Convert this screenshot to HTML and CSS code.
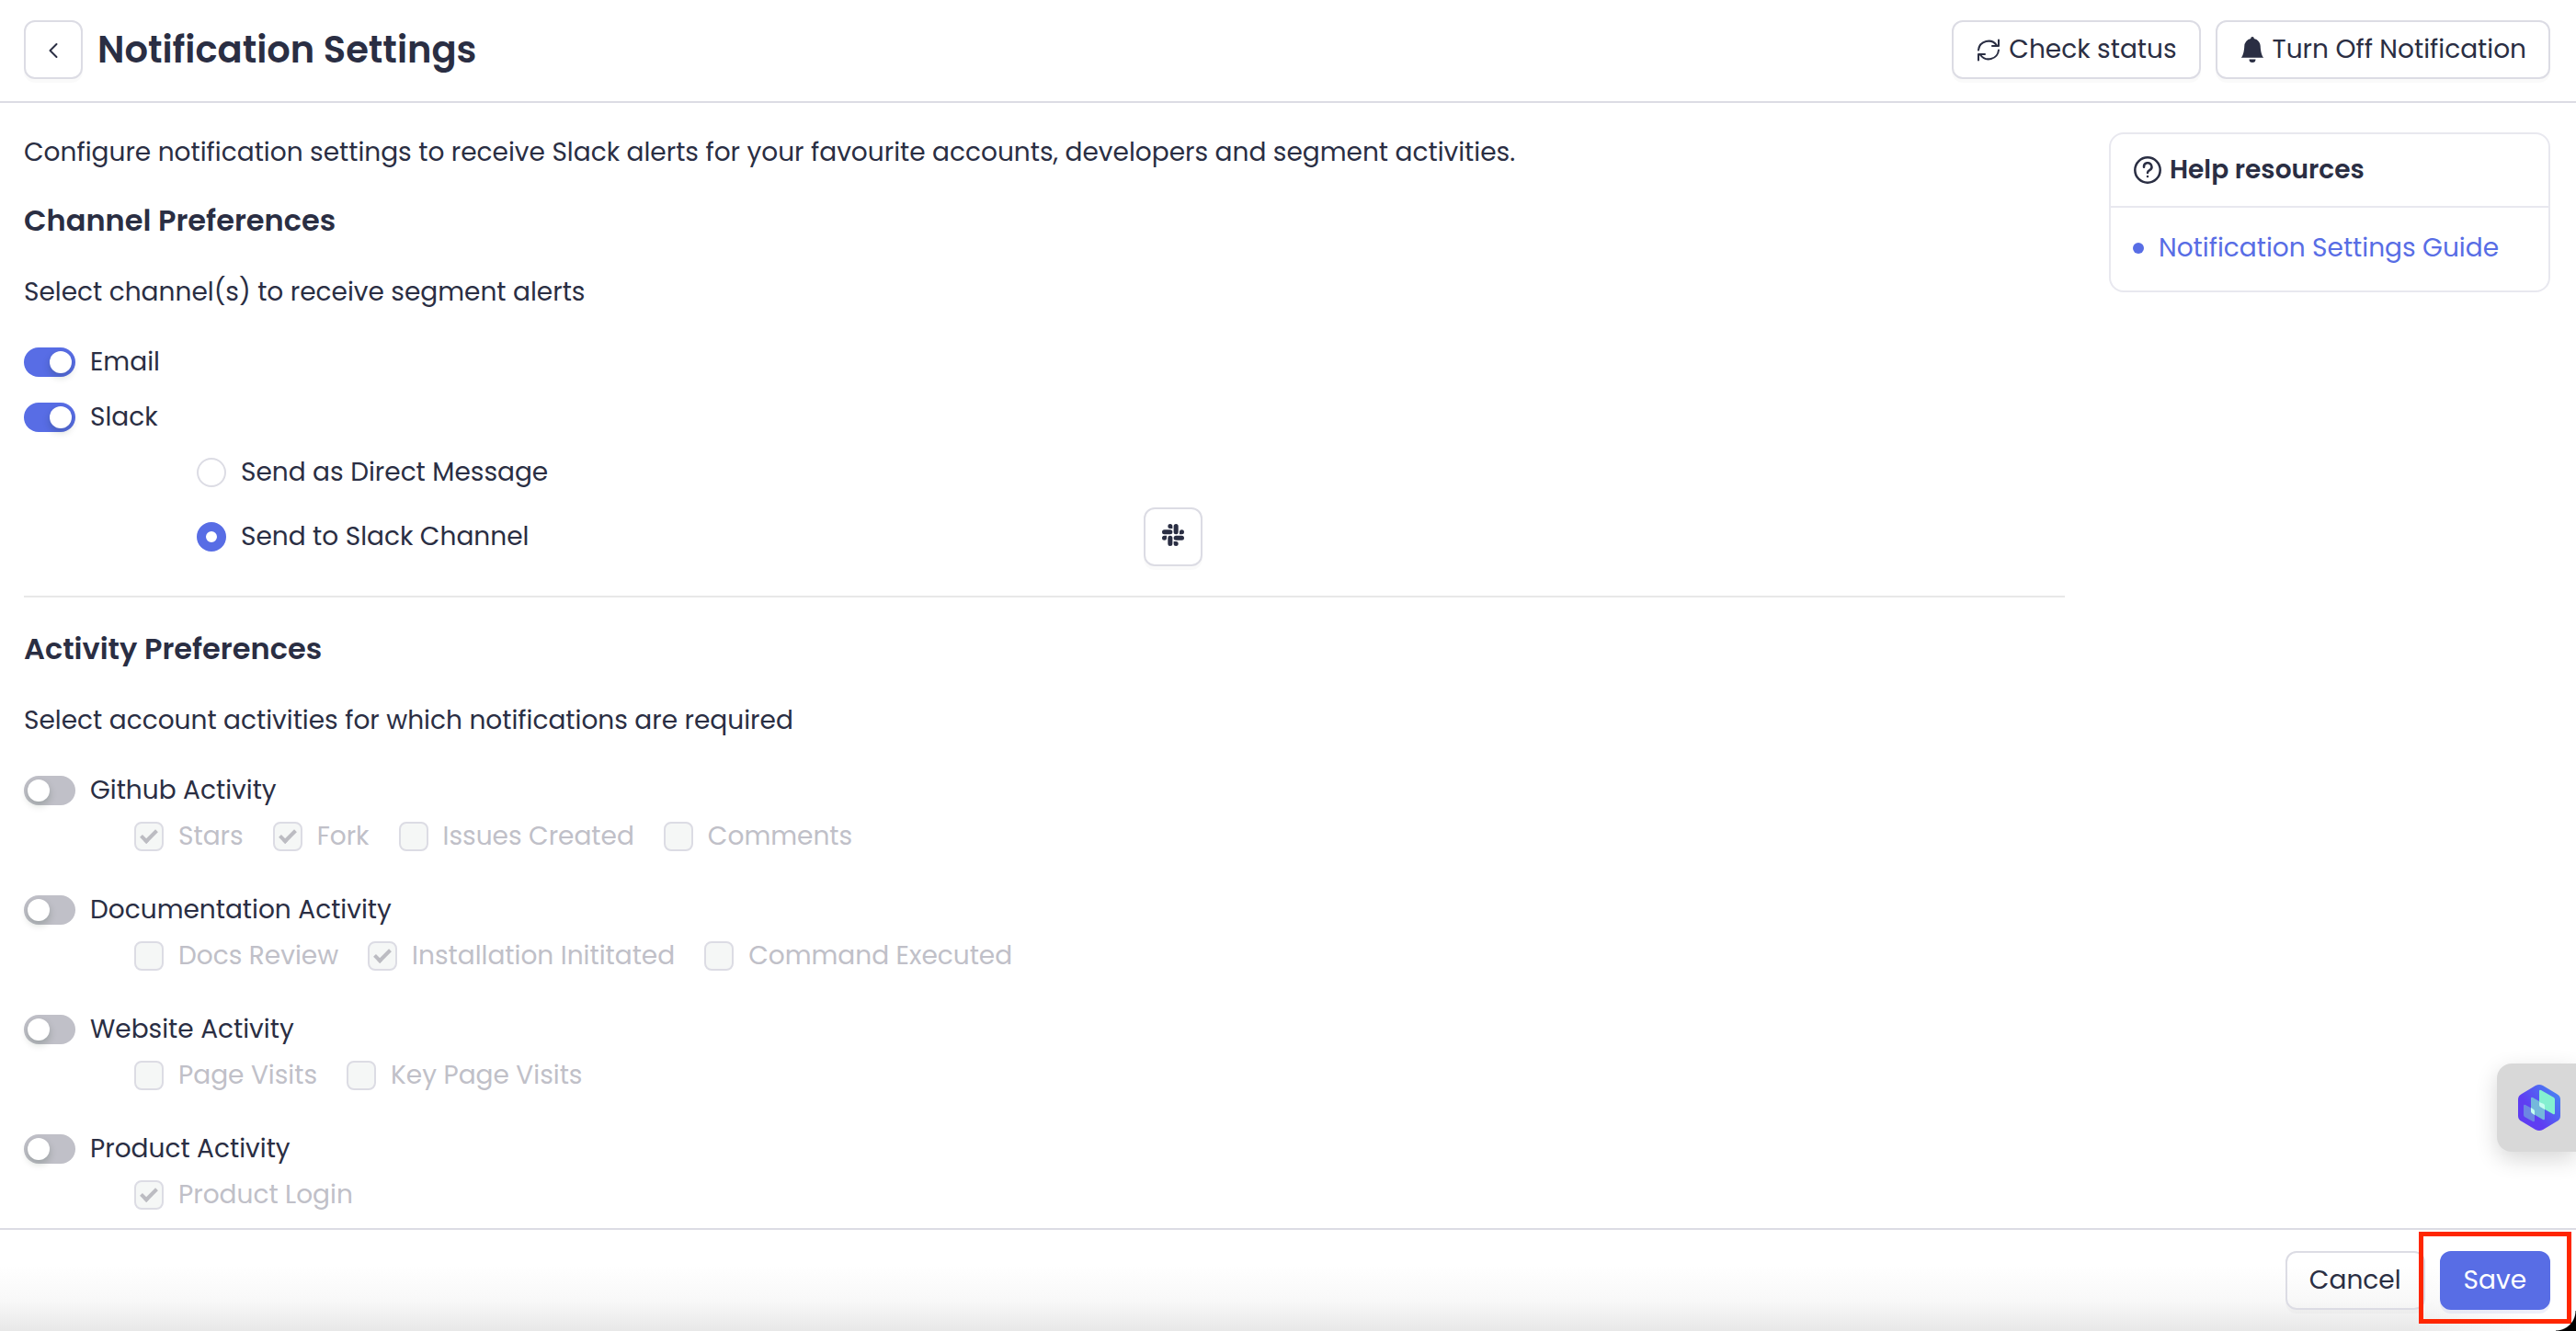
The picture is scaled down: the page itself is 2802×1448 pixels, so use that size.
FILE: index.html
```html
<!DOCTYPE html>
<html lang="en">
<head>
    <meta charset="UTF-8">
    <meta name="viewport" content="width=device-width, initial-scale=1.0">
    <title>Notification Settings</title>
    <link rel="stylesheet" href="styles.css">
</head>
<body>
    <header class="page-header">
        <button class="btn btn-icon" aria-label="Back">
            <svg width="24" height="24" viewBox="0 0 24 24" fill="none" stroke="currentColor" stroke-width="2" stroke-linecap="round" stroke-linejoin="round"><path d="M15.500 6l-7 7 7 7"/></svg>
        </button>
        <h1>Notification Settings</h1>
        <div class="header-actions">
            <button class="btn">
                <svg width="28" height="28" viewBox="0 0 28 28" fill="none" stroke="currentColor" stroke-width="2" stroke-linecap="round" stroke-linejoin="round"><path d="M3 14.500A11 11 0 0 1 23 9.500l1.500.500M25 3.500v6.500h-7M25 14.500A11 11 0 0 1 5 19.500l-1.500-.500M3 25.500v-6.500h7"/></svg>
                Check status
            </button>
            <button class="btn">
                <svg width="28" height="28" viewBox="0 0 16 16" fill="currentColor"><path d="M8 16a2 2 0 0 0 2-2H6a2 2 0 0 0 2 2m.995-14.901a1 1 0 1 0-1.990 0A5 5 0 0 0 3 6c0 1.098-.5 6-2 7h14c-1.500-1-2-5.902-2-7 0-2.420-1.720-4.440-4.005-4.901"/></svg>
                Turn Off Notification
            </button>
        </div>
    </header>

    <main class="page-body">
        <form class="settings" id="settings-form">
            <p class="intro">Configure notification settings to receive Slack alerts for your favourite accounts, developers and segment activities.</p>

            <!-- Channels -->
            <section class="section">
                <h2>Channel Preferences</h2>
                <p class="hint">Select channel(s) to receive segment alerts</p>
                <label class="row"><input type="checkbox" class="switch" checked>Email</label>
                <label class="row"><input type="checkbox" class="switch" checked>Slack</label>
                <div class="slack-options">
                    <label class="row"><input type="radio" class="radio" name="slack-target">Send as Direct Message</label>
                    <div class="slack-channel">
                        <label class="row"><input type="radio" class="radio" name="slack-target" checked>Send to Slack Channel</label>
                        <button type="button" class="btn btn-icon" aria-label="Connect Slack">
                            <svg width="24" height="28" viewBox="0 0 24 28" fill="currentColor"><path d="M5.042 15.165a2.528 2.528 0 0 1-2.520 2.523A2.528 2.528 0 0 1 0 15.165a2.527 2.527 0 0 1 2.522-2.520h2.520v2.520zM6.313 15.165a2.527 2.527 0 0 1 2.521-2.520 2.527 2.527 0 0 1 2.521 2.520v6.313A2.528 2.528 0 0 1 8.834 24a2.528 2.528 0 0 1-2.521-2.522v-6.313zM8.834 5.042a2.528 2.528 0 0 1-2.521-2.520A2.528 2.528 0 0 1 8.834 0a2.528 2.528 0 0 1 2.521 2.522v2.520H8.834zM8.834 6.313a2.528 2.528 0 0 1 2.521 2.521 2.528 2.528 0 0 1-2.521 2.521H2.522A2.528 2.528 0 0 1 0 8.834a2.528 2.528 0 0 1 2.522-2.521h6.312zM18.956 8.834a2.528 2.528 0 0 1 2.522-2.521A2.528 2.528 0 0 1 24 8.834a2.528 2.528 0 0 1-2.522 2.521h-2.522V8.834zM17.688 8.834a2.528 2.528 0 0 1-2.523 2.521 2.527 2.527 0 0 1-2.520-2.521V2.522A2.527 2.527 0 0 1 15.165 0a2.528 2.528 0 0 1 2.523 2.522v6.312zM15.165 18.956a2.528 2.528 0 0 1 2.523 2.522A2.528 2.528 0 0 1 15.165 24a2.527 2.527 0 0 1-2.520-2.522v-2.522h2.520zM15.165 17.688a2.527 2.527 0 0 1-2.520-2.523 2.526 2.526 0 0 1 2.520-2.520h6.313A2.527 2.527 0 0 1 24 15.165a2.528 2.528 0 0 1-2.522 2.523h-6.313z"/></svg>
                        </button>
                    </div>
                </div>
            </section>

            <hr>

            <!-- Activities -->
            <section class="section">
                <h2>Activity Preferences</h2>
                <p class="hint">Select account activities for which notifications are required</p>

                <div class="activity">
                    <label class="row"><input type="checkbox" class="switch">Github Activity</label>
                    <div class="options">
                        <label class="row"><input type="checkbox" class="check" checked disabled>Stars</label>
                        <label class="row"><input type="checkbox" class="check" checked disabled>Fork</label>
                        <label class="row"><input type="checkbox" class="check" disabled>Issues Created</label>
                        <label class="row"><input type="checkbox" class="check" disabled>Comments</label>
                    </div>
                </div>

                <div class="activity">
                    <label class="row"><input type="checkbox" class="switch">Documentation Activity</label>
                    <div class="options">
                        <label class="row"><input type="checkbox" class="check" disabled>Docs Review</label>
                        <label class="row"><input type="checkbox" class="check" checked disabled>Installation Inititated</label>
                        <label class="row"><input type="checkbox" class="check" disabled>Command Executed</label>
                    </div>
                </div>

                <div class="activity">
                    <label class="row"><input type="checkbox" class="switch">Website Activity</label>
                    <div class="options">
                        <label class="row"><input type="checkbox" class="check" disabled>Page Visits</label>
                        <label class="row"><input type="checkbox" class="check" disabled>Key Page Visits</label>
                    </div>
                </div>

                <div class="activity">
                    <label class="row"><input type="checkbox" class="switch">Product Activity</label>
                    <div class="options">
                        <label class="row"><input type="checkbox" class="check" checked disabled>Product Login</label>
                    </div>
                </div>
            </section>
        </form>

        <aside class="help-card">
            <h3>
                <svg width="32" height="32" viewBox="0 0 32 32" fill="none" stroke="currentColor" stroke-width="2.500" stroke-linecap="round" stroke-linejoin="round"><circle cx="16" cy="16" r="13.700"/><path d="M12 12.800a4.200 4.200 0 1 1 6.200 3.300c-1.500.800-2.200 1.500-2.200 2.900"/><path d="M16 23v.1"/></svg>
                Help resources
            </h3>
            <ul>
                <li><a href="#">Notification Settings Guide</a></li>
            </ul>
        </aside>
    </main>

    <footer class="page-footer">
        <button class="btn">Cancel</button>
        <button class="btn btn-primary" form="settings-form">Save</button>
        <div class="highlight"></div>
        <div class="corner"></div>
    </footer>

    <button class="widget" aria-label="Open widget">
        <svg width="48" height="52" viewBox="0 0 48 52">
            <defs>
                <linearGradient id="hex" x1="0" y1="1" x2="1" y2="0.200">
                    <stop offset="0.400" stop-color="#5f3df2"/>
                    <stop offset="1" stop-color="#4783f3"/>
                </linearGradient>
            </defs>
            <path d="M20 2q4-2 8 0l15 9q4 2 4 6v18q0 4-4 6l-15 9q-4 2-8 0L5 41q-4-2-4-6V17q0-4 4-6z" fill="url(#hex)"/>
            <path d="M7 24q0-2 2-1l9 5q1 1 1 2v10q0 2-2 1l-9-5q-1-1-1-2z" fill="#6c86e3"/>
            <path d="M15 16q0-2 2-1l12 7q1 1 1 2v14q0 2-2 1l-12-7q-1-1-1-2z" fill="#74b8dc"/>
            <path d="M24 8q0-2 2-1l14 8q1 1 1 2v15q0 2-2 1l-14-8q-1-1-1-2z" fill="#84f0d0"/>
            <path d="M24 20l5 2q1 1 1 2v4l-5-3q-1-1-1-2zM15 26l3 2q1 1 1 2v4l-3-2q-1-1-1-2z" fill="#c4fdf0"/>
        </svg>
    </button>
</body>
</html>
```
FILE: styles.css
```css
*, *::before {
    margin: 0;
    padding: 0;
    box-sizing: border-box;
}

body {
    display: flex;
    flex-direction: column;
    height: 100vh;
    overflow: hidden;
    font-family: Poppins, Inter, sans-serif;
    font-size: 28px;
    line-height: 44px;
    color: #2a2e43;
    background: #fff;
}

button, input {
    font: inherit;
    color: inherit;
}

/* Header */
.page-header {
    display: flex;
    align-items: center;
    gap: 16px;
    padding: 22px 28px 24px 26px;
    border-bottom: 2px solid #dcdce4;
}

h1 {
    font-size: 40px;
    font-weight: 600;
}

h2 {
    font-size: 32px;
    font-weight: 600;
}

.header-actions {
    display: flex;
    gap: 16px;
    margin-left: auto;
}

/* Buttons */
.btn {
    display: flex;
    align-items: center;
    justify-content: center;
    gap: 8px;
    height: 64px;
    padding: 0 24px;
    border: 2px solid #dcdce4;
    border-radius: 12px;
    background: #fff;
    box-shadow: 0 4px 0 rgba(0, 0, 0, 0.02);
    cursor: pointer;
}

.btn-icon {
    width: 64px;
    padding: 0;
}

.btn-primary {
    border-color: #586de5;
    background: #586de5;
    color: #fff;
    box-shadow: 0 4px 0 rgba(88, 109, 229, 0.1);
}

/* Body */
.page-body {
    flex: 1;
    min-height: 0;
    display: flex;
    align-items: flex-start;
    gap: 48px;
    padding: 32px 28px 0 26px;
    overflow: hidden;
}

.settings {
    flex: 1;
}

.intro {
    margin-bottom: 30px;
}

.hint {
    margin: 34px 0 38px;
}

.row {
    display: flex;
    align-items: center;
    gap: 16px;
    height: 32px;
    width: max-content;
}

.section > .row {
    margin-bottom: 28px;
}

.slack-options {
    padding-left: 188px;
}

.slack-channel {
    display: grid;
    grid-template-columns: 1030px auto;
    align-items: center;
    justify-content: start;
    margin-top: 22px;
}

hr {
    margin: 32px 0 34px;
    border: none;
    border-top: 2px solid #e8e8e8;
}

.activity {
    margin-bottom: 48px;
}

.options {
    display: flex;
    gap: 32px;
    margin-top: 18px;
    padding-left: 120px;
    color: #c0c0c8;
}

/* Switches */
.switch {
    appearance: none;
    display: flex;
    width: 56px;
    height: 32px;
    padding: 4px;
    border-radius: 16px;
    background: #c0c0c8;
}

.switch::before {
    content: "";
    width: 24px;
    height: 24px;
    border-radius: 50%;
    background: #fff;
    box-shadow: 0 4px 8px rgba(0, 35, 11, 0.2);
}

.switch:checked {
    justify-content: flex-end;
    background: #586de5;
}

/* Radios */
.radio {
    appearance: none;
    width: 32px;
    height: 32px;
    border: 2px solid #dcdce4;
    border-radius: 50%;
}

.radio:checked {
    border: 10px solid #586de5;
}

/* Checkboxes */
.check {
    appearance: none;
    display: flex;
    justify-content: center;
    width: 32px;
    height: 32px;
    border: 2px solid #dcdce4;
    border-radius: 8px;
    background: #f5f7f6;
}

.check:checked::before {
    content: "";
    width: 10px;
    height: 18px;
    margin-top: 3px;
    border: solid #bcbcc2;
    border-width: 0 4px 4px 0;
    transform: rotate(45deg);
}

/* Help card */
.help-card {
    width: 480px;
    border: 2px solid #e8e8ef;
    border-radius: 16px;
}

.help-card h3 {
    display: flex;
    align-items: center;
    gap: 8px;
    height: 80px;
    padding: 0 24px;
    border-bottom: 2px solid #e8e8ef;
    font-size: 28px;
    font-weight: 600;
}

.help-card ul {
    padding: 22px 24px 24px;
    list-style: none;
}

.help-card li {
    display: flex;
    align-items: center;
    gap: 16px;
    color: #586de5;
}

.help-card li::before {
    content: "";
    width: 12px;
    height: 12px;
    border-radius: 50%;
    background: #586de5;
}

.help-card a {
    color: inherit;
    text-decoration: none;
}

/* Footer */
.page-footer {
    position: relative;
    display: flex;
    justify-content: flex-end;
    gap: 16px;
    padding: 23px 28px;
    border-top: 2px solid #dcdce4;
    background: linear-gradient(to left, #fff 40px, transparent 180px),
        linear-gradient(#fff 35%, #f8f8f8 70%, #e8e8e8);
}

.page-footer .btn {
    background: none;
}

.page-footer .btn-primary {
    background: #586de5;
}

/* Frame around the save button */
.highlight {
    position: absolute;
    top: 2px;
    right: 5px;
    width: 166px;
    height: 100px;
    border: 5px solid #ff2600;
}

/* Rounded window corner */
.corner {
    position: absolute;
    right: 0;
    bottom: 0;
    width: 22px;
    height: 22px;
    background: radial-gradient(circle at 0 0, transparent 21px, #000 22px);
}

/* Floating widget */
.widget {
    position: fixed;
    right: 0;
    bottom: 195px;
    display: flex;
    align-items: center;
    justify-content: center;
    width: 86px;
    height: 96px;
    padding-left: 6px;
    border: none;
    border-radius: 16px 0 0 16px;
    background: #d8d8d8;
    box-shadow: 0 8px 24px rgba(0, 0, 0, 0.16);
    cursor: pointer;
}
```
